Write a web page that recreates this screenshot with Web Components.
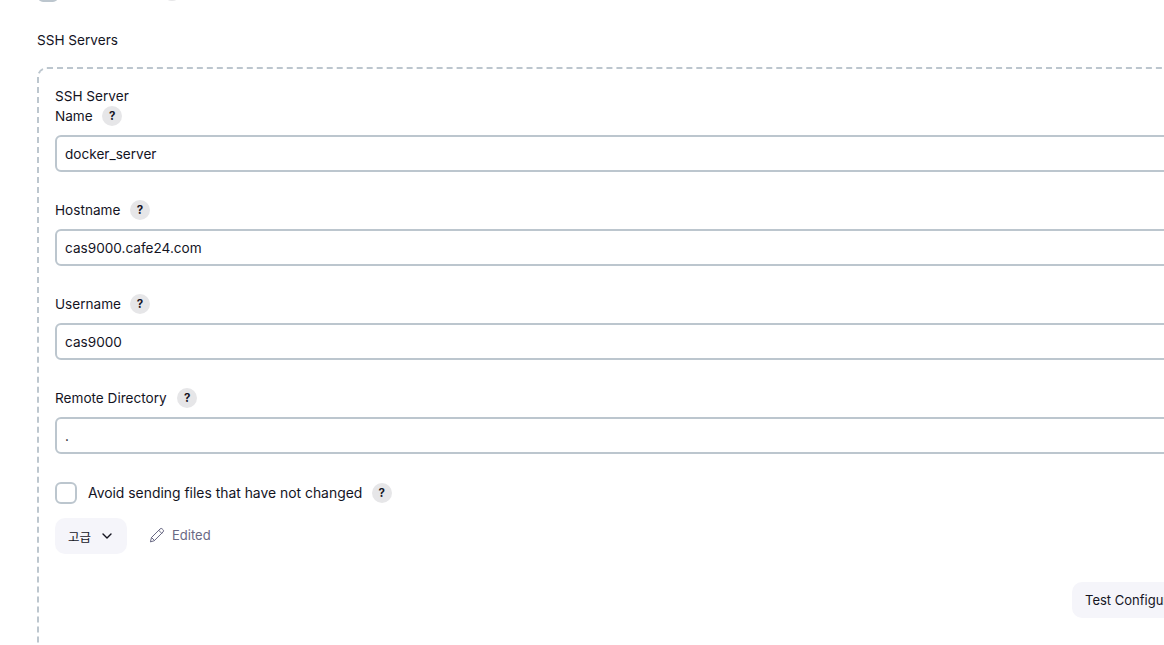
<!DOCTYPE html>
<html>
<head>
<meta charset="utf-8">
<title>SSH Servers</title>
<style>
  html, body { margin: 0; height: 645px; overflow: hidden; background: #fff; }
  body { font-family: Inter, "Noto Sans CJK KR", sans-serif; font-size: 13.6px; color: #14141f; }
</style>
</head>
<body>
<jk-page>
  <jk-top-check></jk-top-check>
  <jk-section-title>SSH Servers</jk-section-title>
  <jk-repeat-box>
    <div slot="title">SSH Server</div>
    <jk-field label="Name" value="docker_server" style="--help-gap: 9.6px"></jk-field>
    <jk-field label="Hostname" value="cas9000.cafe24.com" style="--help-gap: 9.6px"></jk-field>
    <jk-field label="Username" value="cas9000" style="--help-gap: 9px"></jk-field>
    <jk-field label="Remote Directory" value="." style="--help-gap: 10.4px"></jk-field>
    <jk-check label="Avoid sending files that have not changed"></jk-check>
    <jk-advanced label="고급"></jk-advanced>
    <jk-test-row label="Test Configuration"></jk-test-row>
  </jk-repeat-box>
</jk-page>
<script>
  class JkHelp extends HTMLElement {
    constructor() {
      super();
      this.attachShadow({ mode: 'open' }).innerHTML = `
        <style>
          :host {
            display: inline-flex;
            align-items: center;
            justify-content: center;
            width: 20px;
            height: 20px;
            border-radius: 50%;
            background: #e6e6e8;
            color: #14141f;
            font-size: 11.5px;
            font-weight: 700;
            flex: none;
          }
        </style>?`;
    }
  }
  customElements.define('jk-help', JkHelp);

  class JkPage extends HTMLElement {
    constructor() {
      super();
      this.attachShadow({ mode: 'open' }).innerHTML = `
        <style>
          :host { display: block; width: 1300px; margin-top: -20px; padding-left: 37px; }
        </style>
        <slot></slot>`;
    }
  }
  customElements.define('jk-page', JkPage);

  class JkTopCheck extends HTMLElement {
    constructor() {
      super();
      this.attachShadow({ mode: 'open' }).innerHTML = `
        <style>
          :host { display: flex; height: 22px; align-items: flex-end; gap: 104px; padding-left: 1px; }
          .box { width: 20px; height: 20px; border-radius: 5px; background: #bcc6ce; }
          .help { width: 20px; height: 20px; margin-bottom: 1px; border-radius: 50%; background: #e6e6e8; }
        </style>
        <div class="box"></div><div class="help"></div>`;
    }
  }
  customElements.define('jk-top-check', JkTopCheck);

  class JkSectionTitle extends HTMLElement {
    constructor() {
      super();
      this.attachShadow({ mode: 'open' }).innerHTML = `
        <style>
          :host { display: block; margin-top: 28px; line-height: 20px; height: 37px; }
        </style>
        <slot></slot>`;
    }
  }
  customElements.define('jk-section-title', JkSectionTitle);

  class JkRepeatBox extends HTMLElement {
    constructor() {
      super();
      this.attachShadow({ mode: 'open' }).innerHTML = `
        <style>
          :host {
            display: block;
            box-sizing: border-box;
            height: 700px;
            border: 2px dashed #bcc6ce;
            border-radius: 10px;
            padding: 17px 16px 0;
          }
          .title { line-height: 20px; }
        </style>
        <div class="title"><slot name="title"></slot></div>
        <slot></slot>`;
    }
  }
  customElements.define('jk-repeat-box', JkRepeatBox);

  class JkField extends HTMLElement {
    constructor() {
      super();
      this.attachShadow({ mode: 'open' }).innerHTML = `
        <style>
          :host { display: block; height: 94px; }
          .label { display: flex; align-items: center; gap: var(--help-gap, 9.6px); height: 20px; }
          input {
            display: block;
            box-sizing: border-box;
            width: 100%;
            height: 37px;
            margin-top: 9px;
            padding: 0 8px;
            border: 2px solid #bcc6ce;
            border-radius: 6px;
            background: #fff;
            color: #14141f;
            font: 13.6px Inter, sans-serif;
            outline: none;
          }
        </style>
        <div class="label"><span></span><jk-help></jk-help></div>
        <input type="text">`;
      this.shadowRoot.querySelector('span').textContent = this.getAttribute('label');
      this.shadowRoot.querySelector('input').setAttribute('value', this.getAttribute('value'));
    }
  }
  customElements.define('jk-field', JkField);

  class JkCheck extends HTMLElement {
    constructor() {
      super();
      this.attachShadow({ mode: 'open' }).innerHTML = `
        <style>
          :host { display: flex; align-items: center; height: 22px; font-size: 13.9px; }
          .box {
            box-sizing: border-box;
            width: 22px;
            height: 22px;
            margin-right: 11px;
            border: 2px solid #bcc6ce;
            border-radius: 6px;
            background: #fff;
          }
          jk-help { margin-left: 9.5px; }
        </style>
        <div class="box"></div><span></span><jk-help></jk-help>`;
      this.shadowRoot.querySelector('span').textContent = this.getAttribute('label');
    }
  }
  customElements.define('jk-check', JkCheck);

  class JkAdvanced extends HTMLElement {
    constructor() {
      super();
      this.attachShadow({ mode: 'open' }).innerHTML = `
        <style>
          :host { display: flex; align-items: center; margin-top: 14px; height: 36px; }
          .btn {
            display: flex;
            align-items: center;
            gap: 8.5px;
            box-sizing: border-box;
            width: 72px;
            height: 36px;
            padding-left: 13px;
            border-radius: 10px;
            background: #f5f5fa;
            font-size: 12.5px;
            font-family: "Noto Sans CJK KR", sans-serif;
          }
          .edited {
            display: flex;
            align-items: center;
            gap: 7px;
            margin-left: 22px;
            margin-top: -2px;
            color: #696984;
            font-size: 13px;
          }
          svg { display: block; }
        </style>
        <div class="btn"><span></span>
          <svg width="14" height="14" viewBox="0 0 14 14" fill="none" stroke="#14141f" stroke-width="1.4" stroke-linecap="round" stroke-linejoin="round"><path d="M3 5l4 4 4-4"/></svg>
        </div>
        <div class="edited">
          <svg width="16" height="16" viewBox="0 0 16 16" fill="none" stroke="#696984" stroke-width="1" stroke-linejoin="round" stroke-linecap="round"><path d="M1.5 14.500l1-4L11 2a1.600 1.600 0 0 1 2.300 0l.7.7a1.600 1.600 0 0 1 0 2.300l-8.500 8.500z"/><path d="M9.700 3.300l3 3"/><path d="M2.500 10.500l3 3"/></svg>
          Edited
        </div>`;
      this.shadowRoot.querySelector('.btn span').textContent = this.getAttribute('label');
    }
  }
  customElements.define('jk-advanced', JkAdvanced);

  class JkTestRow extends HTMLElement {
    constructor() {
      super();
      this.attachShadow({ mode: 'open' }).innerHTML = `
        <style>
          :host { display: block; margin-top: 28px; padding-left: 1017px; }
          .btn {
            display: inline-flex;
            align-items: center;
            height: 36px;
            padding: 0 13px;
            border-radius: 10px;
            background: #f5f5fa;
            font-size: 13px;
            white-space: nowrap;
          }
        </style>
        <div class="btn"></div>`;
      this.shadowRoot.querySelector('.btn').textContent = this.getAttribute('label');
    }
  }
  customElements.define('jk-test-row', JkTestRow);
</script>
</body>
</html>
